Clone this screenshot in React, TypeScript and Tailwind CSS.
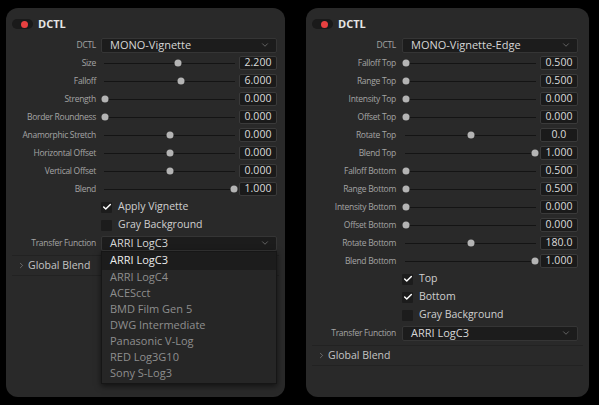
import { Check, ChevronDown, ChevronRight } from "lucide-react"

type Row =
  | { kind: "select"; label: string; value: string }
  | { kind: "slider"; label: string; value: string; pos: number }
  | { kind: "check"; label: string; checked: boolean }

const vignetteRows: Row[] = [
  { kind: "select", label: "DCTL", value: "MONO-Vignette" },
  { kind: "slider", label: "Size", value: "2.200", pos: 0.567 },
  { kind: "slider", label: "Falloff", value: "6.000", pos: 0.59 },
  { kind: "slider", label: "Strength", value: "0.000", pos: 0 },
  { kind: "slider", label: "Border Roundness", value: "0.000", pos: 0 },
  { kind: "slider", label: "Anamorphic Stretch", value: "0.000", pos: 0.5 },
  { kind: "slider", label: "Horizontal Offset", value: "0.000", pos: 0.5 },
  { kind: "slider", label: "Vertical Offset", value: "0.000", pos: 0.5 },
  { kind: "slider", label: "Blend", value: "1.000", pos: 1 },
  { kind: "check", label: "Apply Vignette", checked: true },
  { kind: "check", label: "Gray Background", checked: false },
]

const edgeRows: Row[] = [
  { kind: "select", label: "DCTL", value: "MONO-Vignette-Edge" },
  { kind: "slider", label: "Falloff Top", value: "0.500", pos: 0 },
  { kind: "slider", label: "Range Top", value: "0.500", pos: 0 },
  { kind: "slider", label: "Intensity Top", value: "0.000", pos: 0 },
  { kind: "slider", label: "Offset Top", value: "0.000", pos: 0 },
  { kind: "slider", label: "Rotate Top", value: "0.0", pos: 0.5 },
  { kind: "slider", label: "Blend Top", value: "1.000", pos: 1 },
  { kind: "slider", label: "Falloff Bottom", value: "0.500", pos: 0 },
  { kind: "slider", label: "Range Bottom", value: "0.500", pos: 0 },
  { kind: "slider", label: "Intensity Bottom", value: "0.000", pos: 0 },
  { kind: "slider", label: "Offset Bottom", value: "0.000", pos: 0 },
  { kind: "slider", label: "Rotate Bottom", value: "180.0", pos: 0.5 },
  { kind: "slider", label: "Blend Bottom", value: "1.000", pos: 1 },
  { kind: "check", label: "Top", checked: true },
  { kind: "check", label: "Bottom", checked: true },
  { kind: "check", label: "Gray Background", checked: false },
]

const transferFunctions = [
  "ARRI LogC3",
  "ARRI LogC4",
  "ACEScct",
  "BMD Film Gen 5",
  "DWG Intermediate",
  "Panasonic V-Log",
  "RED Log3G10",
  "Sony S-Log3",
]

const Select = ({ value, open }: { value: string; open?: boolean }) => (
  <div className="relative h-[15px] flex-1">
    <div className="flex h-full items-center justify-between rounded-[2px] border border-[#353535] bg-[#1c1c1c] pl-[8px] pr-[6px] text-[11px] text-[#d6d6d6]">
      <span>{value}</span>
      <ChevronDown size={10} strokeWidth={1.5} className="text-[#8a8a8a]" />
    </div>
    {open && (
      <div className="absolute left-0 right-0 top-full z-10 border border-[#161616] bg-[#262626] pb-[1px] shadow-[0_2px_6px_rgba(0,0,0,0.6)]">
        {transferFunctions.map((name, i) => (
          <div
            key={name}
            className={
              i === 0
                ? "flex h-[18px] items-center bg-[#1c1c1c] pl-[8px] text-[11px] text-[#ececec]"
                : "flex h-[16px] items-center pl-[8px] text-[11px] text-[#8e8e8e]"
            }
          >
            {name}
          </div>
        ))}
      </div>
    )}
  </div>
)

const Slider = ({ value, pos }: { value: string; pos: number }) => (
  <div className="flex flex-1 items-center gap-[2px]">
    <div className="relative h-full flex-1">
      <div className="absolute left-[3px] right-[2px] top-1/2 h-px bg-[#141414]" />
      <div
        className="absolute top-1/2 size-[7px] -translate-x-1/2 -translate-y-1/2 rounded-full bg-[#b4b4b4]"
        style={{ left: `calc(4px + ${pos} * (100% - 7px))` }}
      />
    </div>
    <div className="flex h-[14px] w-[38px] items-center justify-center rounded-[2px] border border-[#3a3a3a] bg-[#1a1a1a] text-[10.5px] text-[#dcdcdc]">
      {value}
    </div>
  </div>
)

const CheckBox = ({ label, checked }: { label: string; checked: boolean }) => (
  <div className="flex items-center gap-[6px]">
    <div className="flex size-[11px] items-center justify-center rounded-[1px] bg-[#1c1c1c]">
      {checked && <Check size={10} strokeWidth={3.5} className="text-white" />}
    </div>
    <span className="text-[10.5px] text-[#cfcfcf]">{label}</span>
  </div>
)

const Panel = ({
  rows,
  width,
  gap,
  padRight,
  open,
}: {
  rows: Row[]
  width: string
  gap: string
  padRight: string
  open?: boolean
}) => (
  <section
    className={`${width} flex h-[389px] flex-col rounded-[12px] bg-[#292929] pt-[8px]`}
  >
    <header className="flex h-[16px] items-center gap-[5px] pl-[6px]">
      <div className="flex h-[10px] w-[21px] items-center justify-end rounded-full bg-[#1a1a1a] pr-[5px]">
        <div className="size-[7px] rounded-full bg-[#e84040]" />
      </div>
      <span className="text-[11px] font-bold text-[#e6e6e6]">DCTL</span>
    </header>

    <div className={`mt-[4px] flex flex-col ${padRight}`}>
      {[...rows, { kind: "select", label: "Transfer Function", value: "ARRI LogC3" } as Row].map(
        (row, i, all) => (
          <div key={row.label + i} className={`flex h-[18px] items-center ${gap}`}>
            <span className="w-[90px] shrink-0 text-right text-[8.5px] tracking-[-0.3px] text-[#a4a4a4]">
              {row.kind === "check" ? "" : row.label}
            </span>
            {row.kind === "select" && (
              <Select value={row.value} open={open && i === all.length - 1} />
            )}
            {row.kind === "slider" && <Slider value={row.value} pos={row.pos} />}
            {row.kind === "check" && <CheckBox label={row.label} checked={row.checked} />}
          </div>
        )
      )}
    </div>

    <div className="mx-[6px] mt-[3px] flex h-[21px] items-center gap-[2px] border-y border-[#222222] pl-[5px] text-[10.5px] text-[#c4c4c4]">
      <ChevronRight size={9} strokeWidth={1.5} className="text-[#9a9a9a]" />
      <span>Global Blend</span>
    </div>
  </section>
)

export default function App() {
  return (
    <div
      className="flex h-[405px] w-[599px] gap-[21px] bg-black pl-[6px] pt-[8px]"
      style={{ fontFamily: '"Open Sans", "Noto Sans", sans-serif' }}
    >
      <Panel rows={vignetteRows} width="w-[279px]" gap="gap-[5px]" padRight="pr-[8px]" open />
      <Panel rows={edgeRows} width="w-[283px]" gap="gap-[6px]" padRight="pr-[11px]" />
    </div>
  )
}
